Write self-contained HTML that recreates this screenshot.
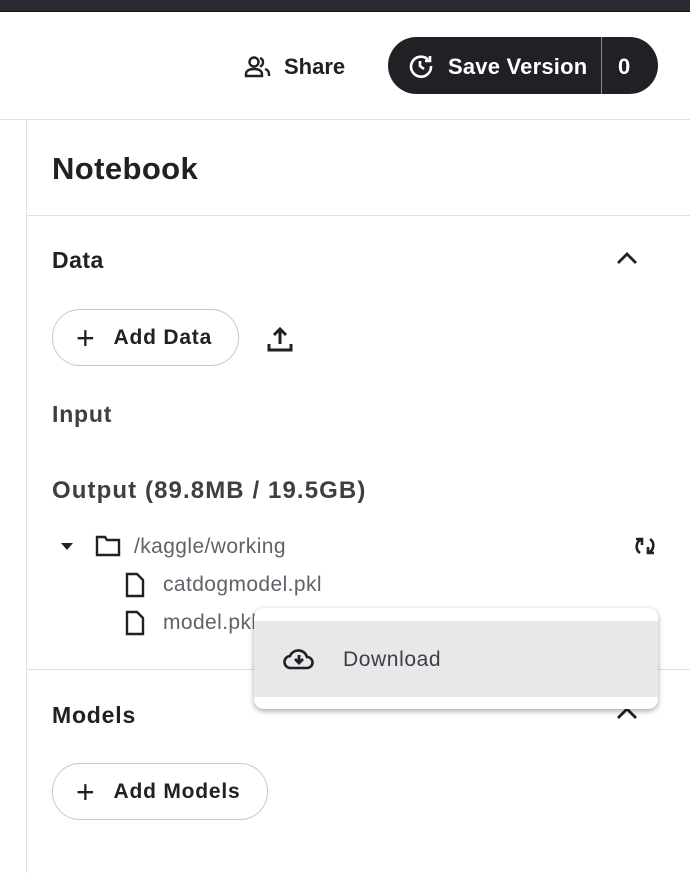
<!DOCTYPE html>
<html><head><meta charset="utf-8"><style>
*{box-sizing:border-box;margin:0;padding:0}
body{width:690px;height:873px;background:#fff;font-family:"Liberation Sans",sans-serif;color:#202124;position:relative;overflow:hidden}
.a{position:absolute}
.b{font-weight:bold}
.pill{position:absolute;border:1px solid #c8c8cc;border-radius:28px;background:#fff;font-weight:bold;font-size:21px;letter-spacing:.8px;display:flex;align-items:center}
.t{font-size:21px;color:#5f6368;letter-spacing:.4px}
</style></head><body>
<div class="a" style="left:0;top:0;width:690px;height:11px;background:#2b2a33"></div>
<div class="a" style="left:0;top:11px;width:690px;height:1px;background:#111"></div>
<div class="a" style="left:0;top:119px;width:690px;height:1px;background:#e0e0e0"></div>
<div class="a" style="left:26px;top:120px;width:1px;height:753px;background:#e0e0e0"></div>
<div class="a" style="left:27px;top:215px;width:663px;height:1px;background:#e0e0e0"></div>
<div class="a" style="left:27px;top:669px;width:663px;height:1px;background:#e0e0e0"></div>

<svg class="a" style="left:244px;top:55px" width="28" height="24" viewBox="0 0 28 24" fill="none" stroke="#202124" stroke-width="2.4"><circle cx="10" cy="7" r="4.5"/><path d="M2 21v-2c0-3 3-5 8-5s8 2 8 5v2z"/><path d="M16 3a4.5 4.5 0 0 1 0 8.5M21 14c3 1 4 3 4 5v2"/></svg>
<div class="a b" style="left:284px;top:54px;font-size:22px">Share</div>
<div class="a" style="left:388px;top:37px;width:270px;height:57px;border-radius:29px;background:#202124"></div>
<div class="a" style="left:601px;top:37px;width:1px;height:57px;background:#8a8a8a"></div>
<svg class="a" style="left:408px;top:53px" width="26" height="26" viewBox="0 0 26 26" fill="none" stroke="#fff" stroke-width="2.6"><path d="M20 6.5A10 10 0 1 0 23 13"/><path d="M22 3v5h-5"/><path d="M12 8v5l4 3"/></svg>
<div class="a b" style="left:448px;top:54px;font-size:22px;color:#fff;letter-spacing:.2px">Save Version</div>
<div class="a b" style="left:618px;top:54px;font-size:22px;color:#fff">0</div>

<div class="a b" style="left:52px;top:151px;font-size:31px;letter-spacing:.4px">Notebook</div>
<div class="a b" style="left:52px;top:247px;font-size:23px;letter-spacing:.5px">Data</div>
<svg class="a" style="left:615px;top:250px" width="24" height="16" viewBox="0 0 24 16" fill="none" stroke="#202124" stroke-width="2.8"><path d="M3 13l9-9 9 9"/></svg>
<div class="pill" style="left:52px;top:309px;width:187px;height:57px"><span style="font-weight:normal;font-size:32px;margin:0 18px 0 23px;line-height:1">+</span>Add Data</div>
<svg class="a" style="left:266px;top:325px" width="28" height="28" viewBox="0 0 28 28" fill="none" stroke="#202124" stroke-width="3"><path d="M14 19V4M8 10l6-6 6 6"/><path d="M3 19v6h22v-6"/></svg>
<div class="a b" style="left:52px;top:401px;font-size:23px;color:#3c4043;letter-spacing:.8px">Input</div>
<div class="a b" style="left:52px;top:477px;font-size:24px;color:#3c4043;letter-spacing:1.1px">Output (89.8MB / 19.5GB)</div>

<svg class="a" style="left:60px;top:541px" width="14" height="10"><path d="M1 2h12L7 9z" fill="#202124"/></svg>
<svg class="a" style="left:95px;top:535px" width="26" height="22" viewBox="0 0 26 22" fill="none" stroke="#202124" stroke-width="2.4"><path d="M2 2h8l2 3h12v15H2z"/></svg>
<div class="a t" style="left:134px;top:535px">/kaggle/working</div>
<svg class="a" style="left:634px;top:535px" width="22" height="22" viewBox="0 0 22 22" fill="none" stroke="#202124" stroke-width="2.6"><path d="M8 4A8 8 0 0 0 6 18"/><path d="M14 18a8 8 0 0 0 2-14"/><path d="M2 4h6v6M20 18h-6v-6"/></svg>
<svg class="a" style="left:125px;top:572px" width="20" height="26" viewBox="0 0 20 26" fill="none" stroke="#202124" stroke-width="2.4"><path d="M2 2h10l6 6v16H2z"/></svg>
<div class="a t" style="left:163px;top:573px">catdogmodel.pkl</div>
<svg class="a" style="left:125px;top:610px" width="20" height="26" viewBox="0 0 20 26" fill="none" stroke="#202124" stroke-width="2.4"><path d="M2 2h10l6 6v16H2z"/></svg>
<div class="a t" style="left:163px;top:611px">model.pkl</div>

<div class="a b" style="left:52px;top:702px;font-size:23px;letter-spacing:.8px">Models</div>
<svg class="a" style="left:615px;top:705px" width="24" height="16" viewBox="0 0 24 16" fill="none" stroke="#202124" stroke-width="2.8"><path d="M3 13l9-9 9 9"/></svg>
<div class="pill" style="left:52px;top:763px;width:216px;height:57px"><span style="font-weight:normal;font-size:32px;margin:0 18px 0 23px;line-height:1">+</span>Add Models</div>

<div class="a" style="left:254px;top:608px;width:404px;height:101px;background:#fff;border-radius:10px;box-shadow:0 2px 6px rgba(0,0,0,.35)"></div>
<div class="a" style="left:254px;top:621px;width:404px;height:76px;background:#e8e8ea"></div>
<svg class="a" style="left:283px;top:646px" width="32" height="26" viewBox="0 0 32 26" fill="none" stroke="#202124" stroke-width="2.6"><path d="M8 22a6 6 0 0 1-1-12 9 9 0 0 1 17 1 5.5 5.5 0 0 1 0 11z"/><path d="M16 9v8M12 13l4 4 4-4" stroke-width="2.8"/></svg>
<div class="a" style="left:343px;top:648px;font-size:21px;color:#3c4043;letter-spacing:.6px">Download</div>
</body></html>
